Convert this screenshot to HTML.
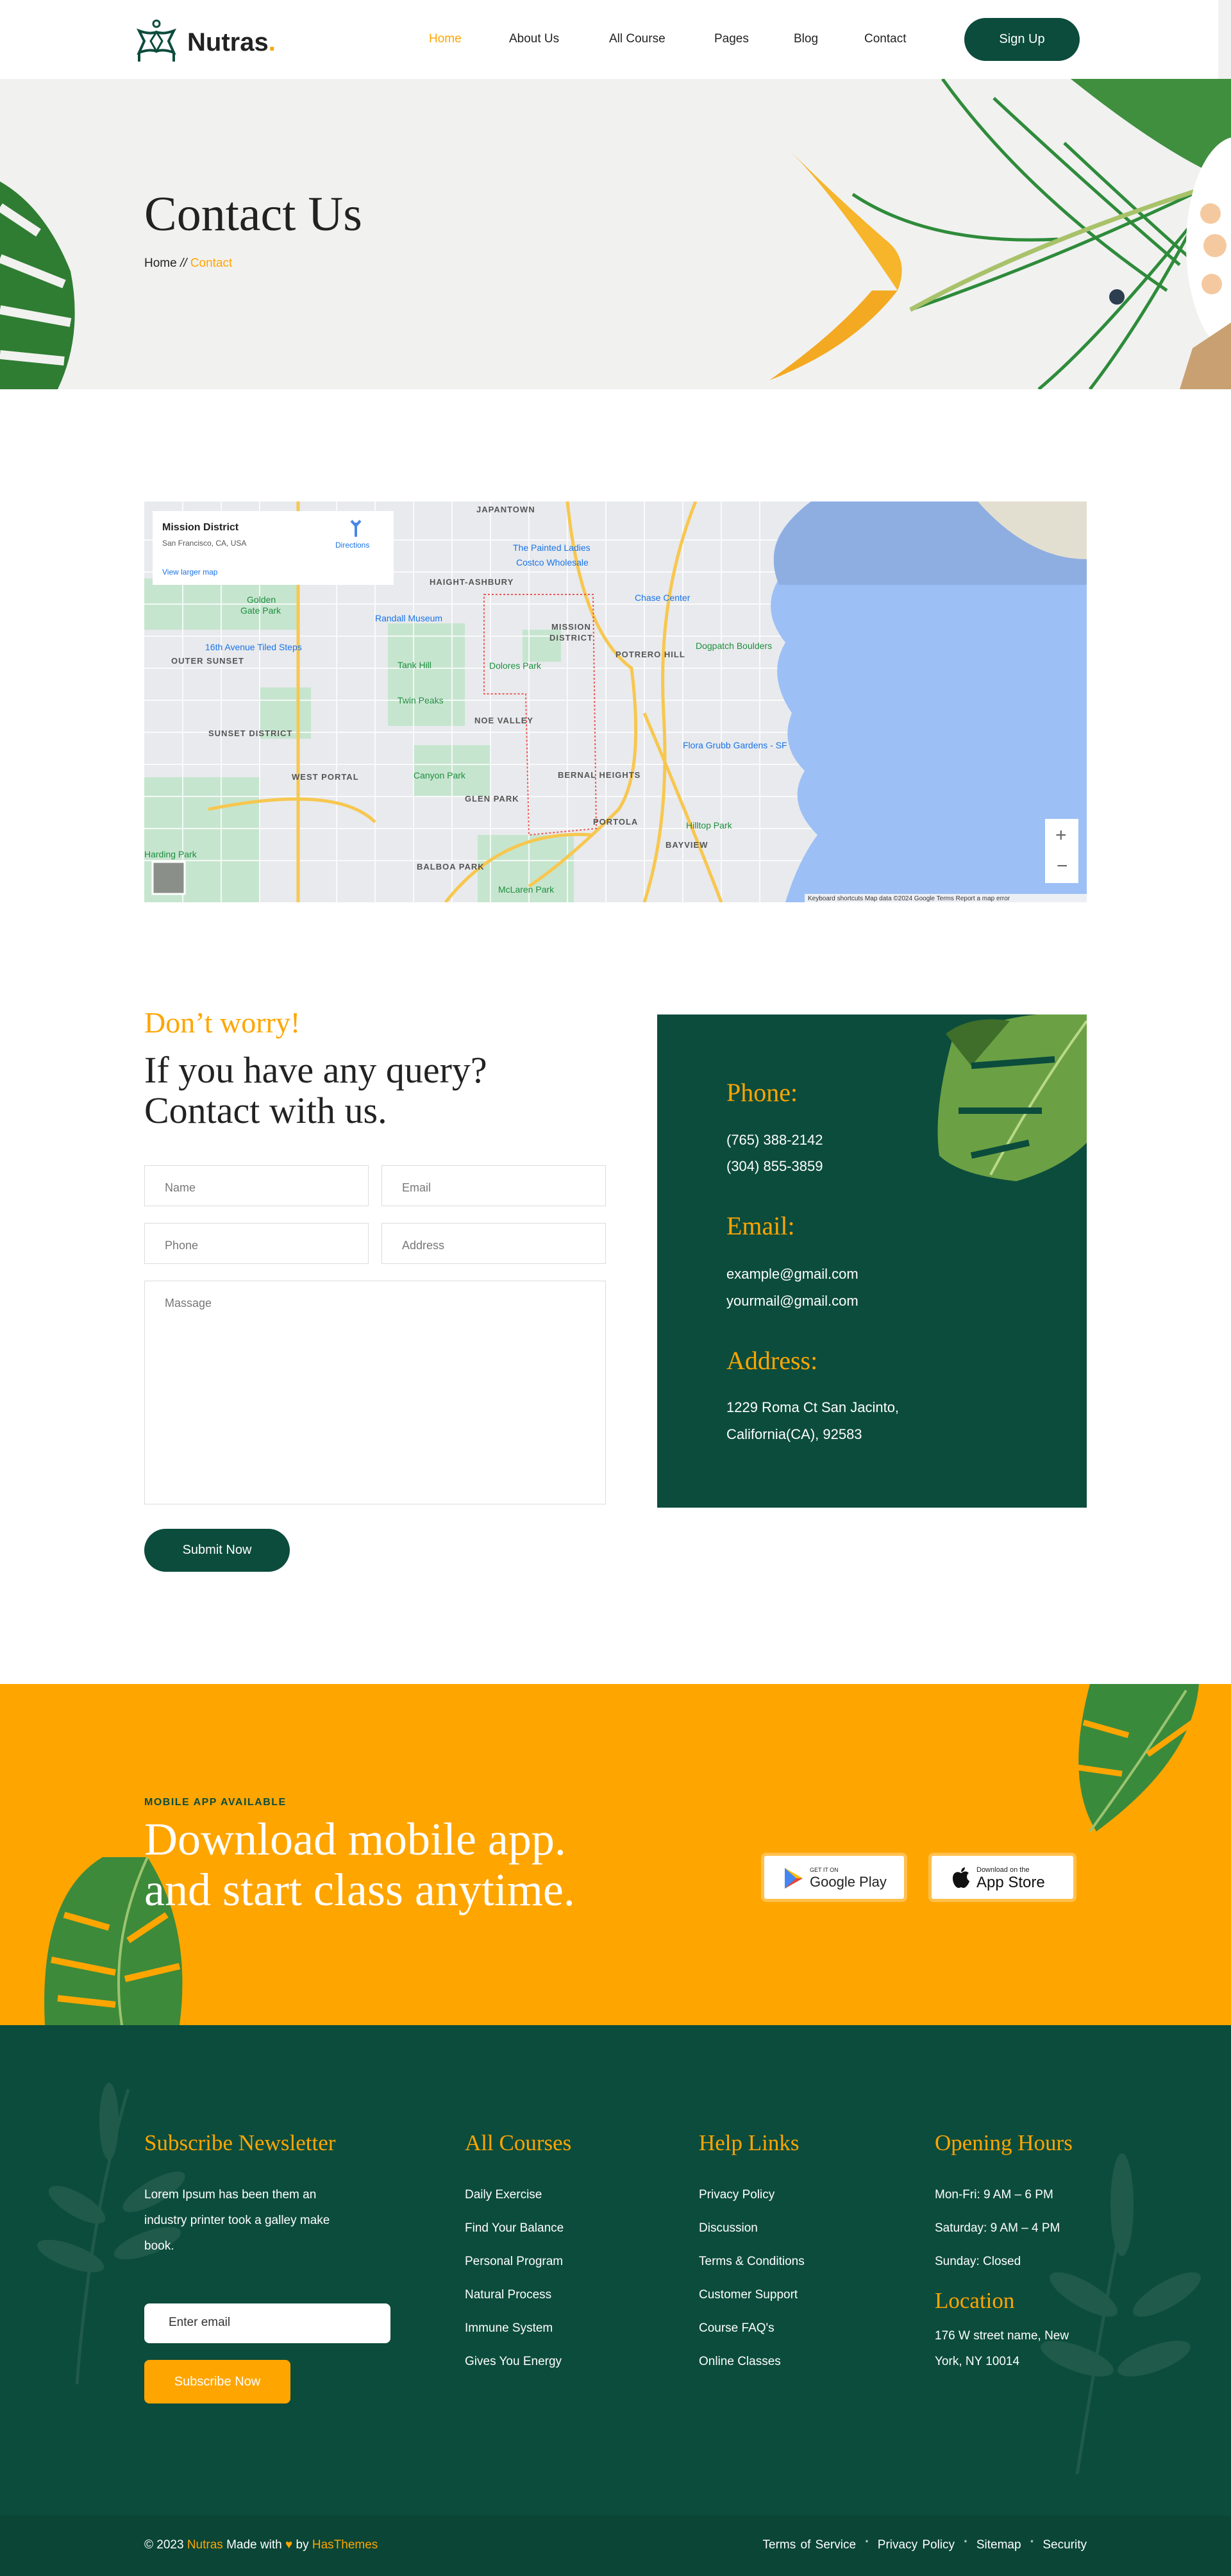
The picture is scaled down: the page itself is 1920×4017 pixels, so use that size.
<!DOCTYPE html>
<html><head><meta charset="utf-8"><style>
*{margin:0;padding:0;box-sizing:border-box}
body{width:1920px;height:4017px;position:relative;background:#fff;font-family:"Liberation Sans",sans-serif;color:#222;overflow:hidden}
.a{position:absolute}
.serif{font-family:"Liberation Serif",serif}
.nav a{position:absolute;top:50px;font-size:19px;color:#222;text-decoration:none}
.inp{position:absolute;border:1.5px solid #dcdcdc;background:#fff;font-size:18px;color:#777;padding:24px 31px}
.g{color:#fff;font-size:22px}
.lab{color:#ffa500;font-size:40px}
.fh{position:absolute;top:3322px;font-size:35px;color:#ffa500;font-family:"Liberation Serif",serif}
.fl{position:absolute;font-size:19px;color:#fff;line-height:52px}
</style></head><body>
<!-- header -->
<div class="a" style="left:0;top:0;width:1900px;height:123px;background:#fff"></div>
<div class="a" style="left:1900px;top:0;width:20px;height:123px;background:#f1f1f1"></div>
<svg class="a" style="left:213px;top:30px" width="64" height="68" viewBox="0 0 64 68"><circle cx="31" cy="7" r="5" fill="none" stroke="#0c4c3c" stroke-width="3"/><path d="M4 18 Q20 24 31 20 Q42 24 58 18 L50 34 L58 52 Q42 46 31 50 Q20 46 4 52 L12 34 Z" fill="none" stroke="#0c4c3c" stroke-width="4"/><path d="M31 20 L22 34 L31 50 L40 34 Z" fill="none" stroke="#0c4c3c" stroke-width="3"/><path d="M4 52 L4 66 M58 52 L58 66" stroke="#0c4c3c" stroke-width="4"/></svg>
<div class="a" style="left:292px;top:44px;font-size:40px;font-weight:bold;color:#222">Nutras<span style="color:#ffa500">.</span></div>
<div class="nav">
<a style="left:669px;color:#ffa500">Home</a><a style="left:794px">About Us</a><a style="left:950px">All Course</a><a style="left:1114px">Pages</a><a style="left:1238px">Blog</a><a style="left:1348px">Contact</a>
</div>
<div class="a" style="left:1504px;top:28px;width:180px;height:67px;border-radius:34px;background:#0c4c3c;color:#fff;font-size:20px;text-align:center;line-height:67px">Sign Up</div>
<!-- hero -->
<div class="a" style="left:0;top:123px;width:1920px;height:484px;background:#f1f1f0;overflow:hidden">
<svg class="a" style="left:0;top:0" width="1920" height="484">
<path d="M0 160 Q70 200 110 300 Q130 400 90 484 L0 484 Z" fill="#2f7d32"/>
<path d="M0 200 L60 240 M0 280 L100 320 M0 360 L110 380 M0 430 L100 440" stroke="#f1f1f0" stroke-width="14"/>
<path d="M1670 0 L1920 0 L1920 160 Q1820 120 1670 0 Z" fill="#3f8f3f"/>
<path d="M1230 110 Q1300 180 1400 330 Q1420 280 1380 250 Q1300 180 1230 110 Z" fill="#f6b52a"/>
<path d="M1400 330 Q1330 420 1200 470 Q1300 400 1360 330 Z" fill="#f3a922"/>
<g stroke="#2e8b3a" stroke-width="5" fill="none">
<path d="M1880 170 Q1650 280 1420 360"/><path d="M1470 0 Q1600 180 1820 330"/><path d="M1550 30 Q1700 170 1840 290"/><path d="M1660 100 Q1820 250 1880 300"/><path d="M1880 200 Q1720 400 1620 484"/><path d="M1860 230 Q1780 380 1700 484"/><path d="M1330 180 Q1450 260 1650 250"/>
</g>
<path d="M1420 360 Q1600 260 1880 170" stroke="#a8c26a" stroke-width="7" fill="none"/>
<ellipse cx="1930" cy="260" rx="80" ry="170" fill="#fff"/>
<g fill="#f5c9a0"><circle cx="1888" cy="210" r="16"/><circle cx="1895" cy="260" r="18"/><circle cx="1890" cy="320" r="16"/></g>
<path d="M1860 420 L1920 380 L1920 484 L1840 484 Z" fill="#c9a071"/>
<circle cx="1742" cy="340" r="12" fill="#2c3e50"/>
</svg>
<div class="a serif" style="left:225px;top:168px;font-size:76px;color:#222">Contact Us</div>
<div class="a" style="left:225px;top:277px;font-size:19px;color:#222">Home <span style="font-style:italic">//</span> <span style="color:#ffa500">Contact</span></div>
</div>
<!-- map -->
<div class="a" style="left:225px;top:782px;width:1470px;height:625px;background:#e8eaed;overflow:hidden">
<svg width="1470" height="625" viewBox="0 0 1470 625">
<g fill="#c6e5cf"><rect x="0" y="120" width="240" height="80"/><rect x="380" y="190" width="120" height="160"/><rect x="590" y="200" width="60" height="50"/><rect x="0" y="430" width="180" height="195"/><rect x="520" y="520" width="150" height="105"/><rect x="420" y="380" width="120" height="80"/><rect x="180" y="290" width="80" height="80"/></g>
<g stroke="#fff" stroke-width="2" opacity=".8">
<path d="M0 60H1100M0 110H1100M0 160H1100M0 210H1100M0 260H1100M0 310H1100M0 360H1100M0 410H1100M0 460H1100M0 510H1100M0 560H1100"/>
<path d="M60 0V625M120 0V625M180 0V625M300 0V625M360 0V625M420 0V625M480 0V625M540 0V625M600 0V625M660 0V625M720 0V625M780 0V625M840 0V625M900 0V625M960 0V625"/>
</g>
<g stroke="#f7c74f" stroke-width="5" fill="none">
<path d="M240 0V625"/><path d="M660 0 Q680 200 760 260 Q780 420 740 480 Q660 560 600 600"/><path d="M860 0 Q800 150 810 330 Q820 500 780 625"/><path d="M100 480 Q300 440 360 500"/><path d="M470 625 Q560 510 700 520"/><path d="M780 330 Q860 520 900 625"/>
</g>
<path d="M1040 0 L1470 0 L1470 625 L1000 625 Q1020 560 1050 520 Q1000 470 1030 420 Q990 380 1010 330 Q970 270 1000 220 Q960 170 990 120 Q960 60 1040 0 Z" fill="#9cbff5"/>
<path d="M1040 0 L1470 0 L1470 130 L990 130 Q960 60 1040 0 Z" fill="#8eaee2"/>
<path d="M1300 0 L1470 0 L1470 90 Q1380 90 1300 0 Z" fill="#e3dfd0"/>
<path d="M530 145 L700 145 L705 510 L600 520 L595 300 L530 300 Z" fill="none" stroke="#e55" stroke-width="2" stroke-dasharray="3 3"/>
<g font-family="Liberation Sans" font-size="13" fill="#555" font-weight="bold" letter-spacing="1">
<text x="445" y="130">HAIGHT-ASHBURY</text><text x="635" y="200">MISSION</text><text x="632" y="217">DISTRICT</text><text x="42" y="253">OUTER SUNSET</text><text x="100" y="366">SUNSET DISTRICT</text><text x="515" y="346">NOE VALLEY</text><text x="230" y="434">WEST PORTAL</text><text x="500" y="468">GLEN PARK</text><text x="645" y="431">BERNAL HEIGHTS</text><text x="700" y="504">PORTOLA</text><text x="425" y="574">BALBOA PARK</text><text x="735" y="243">POTRERO HILL</text><text x="518" y="17">JAPANTOWN</text><text x="813" y="540">BAYVIEW</text></g>
<g font-family="Liberation Sans" font-size="14" fill="#1e8e3e"><text x="160" y="158">Golden</text><text x="150" y="175">Gate Park</text><text x="395" y="260">Tank Hill</text><text x="538" y="261">Dolores Park</text><text x="395" y="315">Twin Peaks</text><text x="420" y="432">Canyon Park</text><text x="552" y="610">McLaren Park</text><text x="845" y="510">Hilltop Park</text><text x="860" y="230">Dogpatch Boulders</text><text x="0" y="555">Harding Park</text></g>
<g font-family="Liberation Sans" font-size="14" fill="#1a73e8"><text x="580" y="100">Costco Wholesale</text><text x="840" y="385">Flora Grubb Gardens - SF</text><text x="575" y="77">The Painted Ladies</text><text x="360" y="187">Randall Museum</text><text x="95" y="232">16th Avenue Tiled Steps</text><text x="765" y="155">Chase Center</text></g>
<rect x="1405" y="495" width="52" height="100" fill="#fff"/>
<text x="1421" y="530" font-size="30" fill="#666" font-family="Liberation Sans">+</text><text x="1423" y="578" font-size="30" fill="#666" font-family="Liberation Sans">−</text>
<rect x="1030" y="612" width="440" height="13" fill="#f5f5f5" opacity=".9"/>
<text x="1035" y="622" font-size="10" fill="#333" font-family="Liberation Sans">Keyboard shortcuts   Map data ©2024 Google   Terms   Report a map error</text>
<rect x="13" y="562" width="50" height="50" fill="#8a8f8a" stroke="#fff" stroke-width="3"/>
<rect x="13" y="15" width="376" height="115" fill="#fff"/>
<text x="28" y="45" font-size="16" font-weight="bold" fill="#222" font-family="Liberation Sans">Mission District</text>
<text x="28" y="69" font-size="12" fill="#555" font-family="Liberation Sans">San Francisco, CA, USA</text>
<text x="28" y="114" font-size="12" fill="#1a73e8" font-family="Liberation Sans">View larger map</text>
<text x="298" y="72" font-size="12" fill="#1a73e8" font-family="Liberation Sans">Directions</text>
<path d="M330 33 L330 55 M330 38 L323 30 M330 38 L337 30" stroke="#4a86e8" stroke-width="4"/>
</svg>
</div>
<!-- contact -->
<div class="a serif" style="left:225px;top:1568px;font-size:46px;color:#ffa500">Don’t worry!</div>
<div class="a serif" style="left:225px;top:1637px;font-size:58px;line-height:63px;color:#222">If you have any query?<br>Contact with us.</div>
<div class="inp" style="left:225px;top:1817px;width:350px;height:64px">Name</div>
<div class="inp" style="left:595px;top:1817px;width:350px;height:64px">Email</div>
<div class="inp" style="left:225px;top:1907px;width:350px;height:64px">Phone</div>
<div class="inp" style="left:595px;top:1907px;width:350px;height:64px">Address</div>
<div class="inp" style="left:225px;top:1997px;width:720px;height:349px">Massage</div>
<div class="a" style="left:225px;top:2384px;width:227px;height:67px;border-radius:34px;background:#0c4c3c;color:#fff;font-size:20px;text-align:center;line-height:67px">Submit Now</div>
<div class="a" style="left:1025px;top:1582px;width:670px;height:769px;background:#0c4c3c;overflow:hidden">
<svg class="a" style="left:430px;top:0" width="240" height="260"><path d="M30 40 Q120 -10 240 0 L240 200 Q200 240 130 260 Q40 250 10 220 Q0 150 30 40 Z" fill="#6ba144"/><path d="M20 30 Q60 0 120 10 L60 80 Z" fill="#3f6e2a"/><path d="M240 10 Q160 120 90 250" stroke="#b9d98a" stroke-width="4" fill="none"/><path d="M60 80 L190 70 M40 150 L170 150 M60 220 L150 200" stroke="#0c4c3c" stroke-width="10"/></svg>
<div class="a serif lab" style="left:108px;top:98px">Phone:</div>
<div class="a g" style="left:108px;top:175px;line-height:41px">(765) 388-2142<br>(304) 855-3859</div>
<div class="a serif lab" style="left:108px;top:306px">Email:</div>
<div class="a g" style="left:108px;top:384px;line-height:42px">example@gmail.com<br>yourmail@gmail.com</div>
<div class="a serif lab" style="left:108px;top:516px">Address:</div>
<div class="a g" style="left:108px;top:592px;line-height:42px">1229 Roma Ct San Jacinto,<br>California(CA), 92583</div>
</div>
<!-- app section -->
<div class="a" style="left:0;top:2626px;width:1920px;height:532px;background:#ffa500;overflow:hidden">
<svg class="a" style="left:0;top:0" width="1920" height="532">
<path d="M160 270 Q60 330 70 532 L280 532 Q300 380 230 270 Z" fill="#3d8a3a"/>
<path d="M230 270 Q170 400 190 532" stroke="#9cc470" stroke-width="4" fill="none"/>
<path d="M100 360 L170 380 M80 430 L180 450 M90 490 L180 500 M260 360 L200 400 M280 440 L195 460" stroke="#ffa500" stroke-width="10"/>
<path d="M1700 0 L1870 0 Q1860 120 1710 230 Q1660 150 1700 0 Z" fill="#3a8a3c"/>
<path d="M1850 10 Q1780 120 1700 230" stroke="#9cc470" stroke-width="4" fill="none"/>
<path d="M1690 60 L1760 80 M1680 130 L1750 140 M1860 60 L1790 110" stroke="#ffa500" stroke-width="9"/>
</svg>
<div class="a" style="left:225px;top:176px;font-size:16px;font-weight:bold;letter-spacing:1.5px;color:#0c4c3c">MOBILE APP AVAILABLE</div>
<div class="a serif" style="left:225px;top:203px;font-size:72px;line-height:79px;color:#fff">Download mobile app.<br>and start class anytime.</div>
<div class="a" style="left:1187px;top:263px;width:228px;height:77px;background:#fff;border-radius:8px;border:5px solid #ffc04d"></div>
<svg class="a" style="left:1222px;top:285px" width="32" height="36"><path d="M2 2 L30 18 L2 34 Z" fill="#34a853"/><path d="M2 2 L20 18 L2 34 Z" fill="#4285f4"/><path d="M20 18 L30 18 L2 34 Z" fill="#ea4335"/><path d="M2 2 L30 18 L20 18Z" fill="#fbbc04"/></svg>
<div class="a" style="left:1263px;top:285px;font-size:9px;color:#222">GET IT ON</div>
<div class="a" style="left:1263px;top:296px;font-size:22px;color:#222">Google Play</div>
<div class="a" style="left:1448px;top:263px;width:231px;height:77px;background:#fff;border-radius:8px;border:5px solid #ffc04d"></div>
<svg class="a" style="left:1485px;top:285px" width="28" height="34" viewBox="0 0 28 34"><path d="M14 10 C8 6 1 9 1 18 C1 26 6 33 10 33 C12 33 13 32 14 32 C15 32 16 33 18 33 C22 33 27 25 27 22 C22 20 22 12 26 10 C23 6 18 7 14 10 Z M14 8 C14 4 17 1 20 1 C20 5 17 8 14 8 Z" fill="#111"/></svg>
<div class="a" style="left:1523px;top:284px;font-size:11px;color:#222">Download on the</div>
<div class="a" style="left:1523px;top:296px;font-size:24px;color:#111">App Store</div>
</div>
<!-- footer -->
<div class="a" style="left:0;top:3158px;width:1920px;height:765px;background:#0c4c3c;overflow:hidden">
<svg class="a" style="left:0;top:0" width="1920" height="765" opacity=".08"><path d="M200 100 Q140 300 120 560" stroke="#fff" stroke-width="5" fill="none"/><g fill="#fff"><ellipse cx="120" cy="280" rx="50" ry="18" transform="rotate(30 120 280)"/><ellipse cx="110" cy="360" rx="55" ry="18" transform="rotate(20 110 360)"/><ellipse cx="240" cy="260" rx="55" ry="18" transform="rotate(-30 240 260)"/><ellipse cx="230" cy="340" rx="55" ry="18" transform="rotate(-20 230 340)"/><ellipse cx="170" cy="150" rx="15" ry="60"/><ellipse cx="1750" cy="280" rx="18" ry="80"/><ellipse cx="1690" cy="420" rx="60" ry="20" transform="rotate(30 1690 420)"/><ellipse cx="1820" cy="420" rx="60" ry="20" transform="rotate(-30 1820 420)"/><ellipse cx="1680" cy="520" rx="60" ry="20" transform="rotate(20 1680 520)"/><ellipse cx="1800" cy="520" rx="60" ry="20" transform="rotate(-20 1800 520)"/></g><path d="M1760 250 Q1720 450 1680 700" stroke="#fff" stroke-width="5" fill="none"/></svg>
</div>
<div class="fh" style="left:225px">Subscribe Newsletter</div>
<div class="fh" style="left:725px">All Courses</div>
<div class="fh" style="left:1090px">Help Links</div>
<div class="fh" style="left:1458px">Opening Hours</div>
<div class="fl" style="left:225px;top:3403px;line-height:40px;width:340px">Lorem Ipsum has been them an industry printer took a galley make book.</div>
<div class="a" style="left:225px;top:3592px;width:384px;height:62px;background:#fff;border-radius:8px;font-size:19px;color:#333;padding:19px 38px">Enter email</div>
<div class="a" style="left:225px;top:3680px;width:228px;height:68px;background:#ffa500;border-radius:8px;font-size:20px;color:#fff;text-align:center;line-height:68px">Subscribe Now</div>
<div class="fl" style="left:725px;top:3397px">Daily Exercise<br>Find Your Balance<br>Personal Program<br>Natural Process<br>Immune System<br>Gives You Energy</div>
<div class="fl" style="left:1090px;top:3397px">Privacy Policy<br>Discussion<br>Terms &amp; Conditions<br>Customer Support<br>Course FAQ's<br>Online Classes</div>
<div class="fl" style="left:1458px;top:3397px">Mon-Fri: 9 AM – 6 PM<br>Saturday: 9 AM – 4 PM<br>Sunday: Closed</div>
<div class="a serif" style="left:1458px;top:3568px;font-size:35px;color:#ffa500">Location</div>
<div class="fl" style="left:1458px;top:3623px;line-height:40px;width:235px">176 W street name, New York, NY 10014</div>
<div class="a" style="left:0;top:3923px;width:1920px;height:94px;background:#0a4536"></div>
<div class="a" style="left:225px;top:3958px;font-size:19px;color:#fff">© 2023 <span style="color:#ffa500">Nutras</span> Made with <span style="color:#ffa500">♥</span> by <span style="color:#ffa500">HasThemes</span></div>
<div class="a" style="left:1130px;top:3958px;font-size:19px;color:#fff;width:565px;text-align:right;word-spacing:2px">Terms of Service &nbsp;<span style="font-size:12px;vertical-align:top">*</span>&nbsp; Privacy Policy &nbsp;<span style="font-size:12px;vertical-align:top">*</span>&nbsp; Sitemap &nbsp;<span style="font-size:12px;vertical-align:top">*</span>&nbsp; Security</div>
</body></html>
